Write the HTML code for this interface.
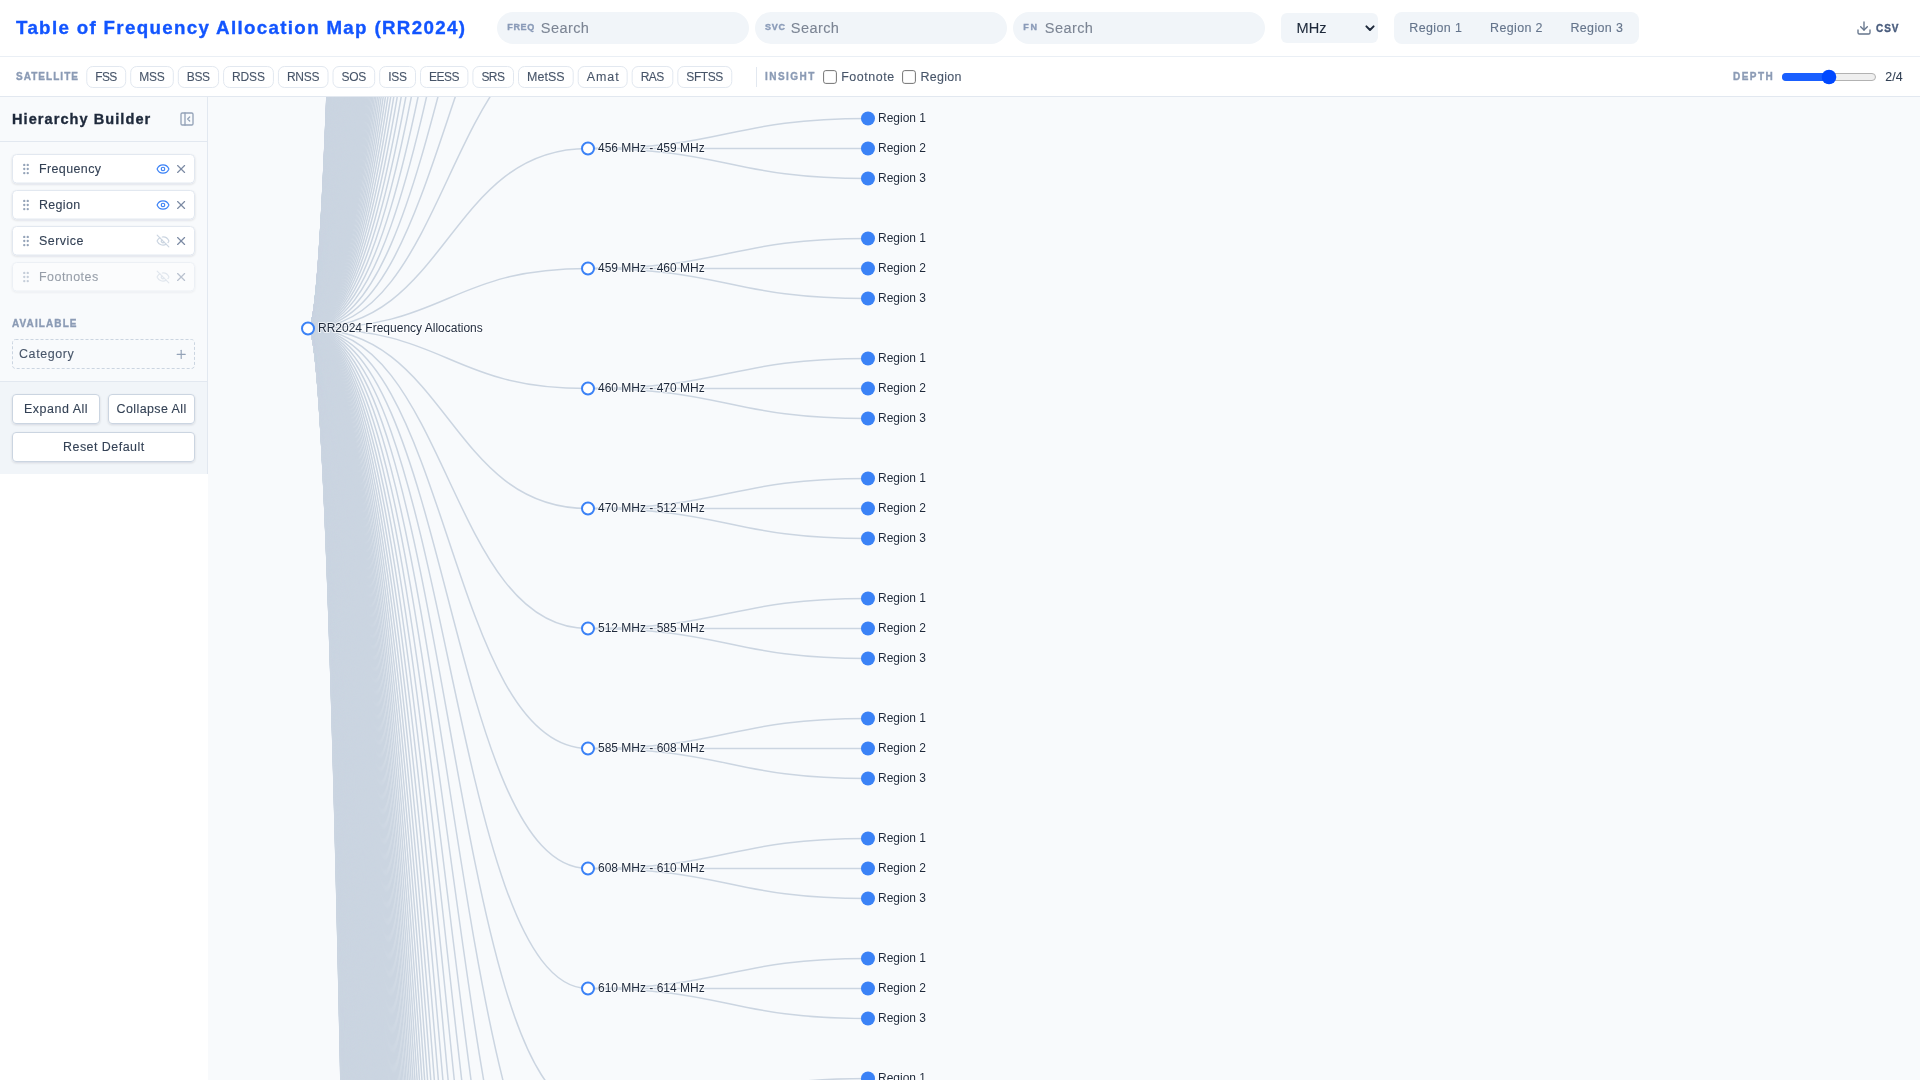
<!DOCTYPE html>
<html><head><meta charset="utf-8"><title>Table of Frequency Allocation Map (RR2024)</title>
<style>html,body{margin:0;padding:0;width:1920px;height:1080px;overflow:hidden;background:#fff}
svg{display:block;will-change:transform;font-family:"Liberation Sans",sans-serif}</style></head>
<body><svg width="1920" height="1080" viewBox="0 0 1920 1080">
<defs><filter id="sh" x="-10%" y="-30%" width="120%" height="170%"><feDropShadow dx="0" dy="1" stdDeviation="1" flood-color="#0f172a" flood-opacity="0.12"/></filter><clipPath id="cv"><rect x="208" y="97" width="1712" height="983"/></clipPath></defs>
<rect x="0" y="0" width="1920" height="1080" fill="#ffffff"/><rect x="208" y="97" width="1712" height="983" fill="#f8fafc"/><g clip-path="url(#cv)"><g transform="translate(0,0.5)"><g fill="none" stroke="#cbd5e1" stroke-width="1.5"><path d="M308,328C448.0,328 448.0,-36212 588,-36212"/><path d="M308,328C448.0,328 448.0,-36092 588,-36092"/><path d="M308,328C448.0,328 448.0,-35972 588,-35972"/><path d="M308,328C448.0,328 448.0,-35852 588,-35852"/><path d="M308,328C448.0,328 448.0,-35732 588,-35732"/><path d="M308,328C448.0,328 448.0,-35612 588,-35612"/><path d="M308,328C448.0,328 448.0,-35492 588,-35492"/><path d="M308,328C448.0,328 448.0,-35372 588,-35372"/><path d="M308,328C448.0,328 448.0,-35252 588,-35252"/><path d="M308,328C448.0,328 448.0,-35132 588,-35132"/><path d="M308,328C448.0,328 448.0,-35012 588,-35012"/><path d="M308,328C448.0,328 448.0,-34892 588,-34892"/><path d="M308,328C448.0,328 448.0,-34772 588,-34772"/><path d="M308,328C448.0,328 448.0,-34652 588,-34652"/><path d="M308,328C448.0,328 448.0,-34532 588,-34532"/><path d="M308,328C448.0,328 448.0,-34412 588,-34412"/><path d="M308,328C448.0,328 448.0,-34292 588,-34292"/><path d="M308,328C448.0,328 448.0,-34172 588,-34172"/><path d="M308,328C448.0,328 448.0,-34052 588,-34052"/><path d="M308,328C448.0,328 448.0,-33932 588,-33932"/><path d="M308,328C448.0,328 448.0,-33812 588,-33812"/><path d="M308,328C448.0,328 448.0,-33692 588,-33692"/><path d="M308,328C448.0,328 448.0,-33572 588,-33572"/><path d="M308,328C448.0,328 448.0,-33452 588,-33452"/><path d="M308,328C448.0,328 448.0,-33332 588,-33332"/><path d="M308,328C448.0,328 448.0,-33212 588,-33212"/><path d="M308,328C448.0,328 448.0,-33092 588,-33092"/><path d="M308,328C448.0,328 448.0,-32972 588,-32972"/><path d="M308,328C448.0,328 448.0,-32852 588,-32852"/><path d="M308,328C448.0,328 448.0,-32732 588,-32732"/><path d="M308,328C448.0,328 448.0,-32612 588,-32612"/><path d="M308,328C448.0,328 448.0,-32492 588,-32492"/><path d="M308,328C448.0,328 448.0,-32372 588,-32372"/><path d="M308,328C448.0,328 448.0,-32252 588,-32252"/><path d="M308,328C448.0,328 448.0,-32132 588,-32132"/><path d="M308,328C448.0,328 448.0,-32012 588,-32012"/><path d="M308,328C448.0,328 448.0,-31892 588,-31892"/><path d="M308,328C448.0,328 448.0,-31772 588,-31772"/><path d="M308,328C448.0,328 448.0,-31652 588,-31652"/><path d="M308,328C448.0,328 448.0,-31532 588,-31532"/><path d="M308,328C448.0,328 448.0,-31412 588,-31412"/><path d="M308,328C448.0,328 448.0,-31292 588,-31292"/><path d="M308,328C448.0,328 448.0,-31172 588,-31172"/><path d="M308,328C448.0,328 448.0,-31052 588,-31052"/><path d="M308,328C448.0,328 448.0,-30932 588,-30932"/><path d="M308,328C448.0,328 448.0,-30812 588,-30812"/><path d="M308,328C448.0,328 448.0,-30692 588,-30692"/><path d="M308,328C448.0,328 448.0,-30572 588,-30572"/><path d="M308,328C448.0,328 448.0,-30452 588,-30452"/><path d="M308,328C448.0,328 448.0,-30332 588,-30332"/><path d="M308,328C448.0,328 448.0,-30212 588,-30212"/><path d="M308,328C448.0,328 448.0,-30092 588,-30092"/><path d="M308,328C448.0,328 448.0,-29972 588,-29972"/><path d="M308,328C448.0,328 448.0,-29852 588,-29852"/><path d="M308,328C448.0,328 448.0,-29732 588,-29732"/><path d="M308,328C448.0,328 448.0,-29612 588,-29612"/><path d="M308,328C448.0,328 448.0,-29492 588,-29492"/><path d="M308,328C448.0,328 448.0,-29372 588,-29372"/><path d="M308,328C448.0,328 448.0,-29252 588,-29252"/><path d="M308,328C448.0,328 448.0,-29132 588,-29132"/><path d="M308,328C448.0,328 448.0,-29012 588,-29012"/><path d="M308,328C448.0,328 448.0,-28892 588,-28892"/><path d="M308,328C448.0,328 448.0,-28772 588,-28772"/><path d="M308,328C448.0,328 448.0,-28652 588,-28652"/><path d="M308,328C448.0,328 448.0,-28532 588,-28532"/><path d="M308,328C448.0,328 448.0,-28412 588,-28412"/><path d="M308,328C448.0,328 448.0,-28292 588,-28292"/><path d="M308,328C448.0,328 448.0,-28172 588,-28172"/><path d="M308,328C448.0,328 448.0,-28052 588,-28052"/><path d="M308,328C448.0,328 448.0,-27932 588,-27932"/><path d="M308,328C448.0,328 448.0,-27812 588,-27812"/><path d="M308,328C448.0,328 448.0,-27692 588,-27692"/><path d="M308,328C448.0,328 448.0,-27572 588,-27572"/><path d="M308,328C448.0,328 448.0,-27452 588,-27452"/><path d="M308,328C448.0,328 448.0,-27332 588,-27332"/><path d="M308,328C448.0,328 448.0,-27212 588,-27212"/><path d="M308,328C448.0,328 448.0,-27092 588,-27092"/><path d="M308,328C448.0,328 448.0,-26972 588,-26972"/><path d="M308,328C448.0,328 448.0,-26852 588,-26852"/><path d="M308,328C448.0,328 448.0,-26732 588,-26732"/><path d="M308,328C448.0,328 448.0,-26612 588,-26612"/><path d="M308,328C448.0,328 448.0,-26492 588,-26492"/><path d="M308,328C448.0,328 448.0,-26372 588,-26372"/><path d="M308,328C448.0,328 448.0,-26252 588,-26252"/><path d="M308,328C448.0,328 448.0,-26132 588,-26132"/><path d="M308,328C448.0,328 448.0,-26012 588,-26012"/><path d="M308,328C448.0,328 448.0,-25892 588,-25892"/><path d="M308,328C448.0,328 448.0,-25772 588,-25772"/><path d="M308,328C448.0,328 448.0,-25652 588,-25652"/><path d="M308,328C448.0,328 448.0,-25532 588,-25532"/><path d="M308,328C448.0,328 448.0,-25412 588,-25412"/><path d="M308,328C448.0,328 448.0,-25292 588,-25292"/><path d="M308,328C448.0,328 448.0,-25172 588,-25172"/><path d="M308,328C448.0,328 448.0,-25052 588,-25052"/><path d="M308,328C448.0,328 448.0,-24932 588,-24932"/><path d="M308,328C448.0,328 448.0,-24812 588,-24812"/><path d="M308,328C448.0,328 448.0,-24692 588,-24692"/><path d="M308,328C448.0,328 448.0,-24572 588,-24572"/><path d="M308,328C448.0,328 448.0,-24452 588,-24452"/><path d="M308,328C448.0,328 448.0,-24332 588,-24332"/><path d="M308,328C448.0,328 448.0,-24212 588,-24212"/><path d="M308,328C448.0,328 448.0,-24092 588,-24092"/><path d="M308,328C448.0,328 448.0,-23972 588,-23972"/><path d="M308,328C448.0,328 448.0,-23852 588,-23852"/><path d="M308,328C448.0,328 448.0,-23732 588,-23732"/><path d="M308,328C448.0,328 448.0,-23612 588,-23612"/><path d="M308,328C448.0,328 448.0,-23492 588,-23492"/><path d="M308,328C448.0,328 448.0,-23372 588,-23372"/><path d="M308,328C448.0,328 448.0,-23252 588,-23252"/><path d="M308,328C448.0,328 448.0,-23132 588,-23132"/><path d="M308,328C448.0,328 448.0,-23012 588,-23012"/><path d="M308,328C448.0,328 448.0,-22892 588,-22892"/><path d="M308,328C448.0,328 448.0,-22772 588,-22772"/><path d="M308,328C448.0,328 448.0,-22652 588,-22652"/><path d="M308,328C448.0,328 448.0,-22532 588,-22532"/><path d="M308,328C448.0,328 448.0,-22412 588,-22412"/><path d="M308,328C448.0,328 448.0,-22292 588,-22292"/><path d="M308,328C448.0,328 448.0,-22172 588,-22172"/><path d="M308,328C448.0,328 448.0,-22052 588,-22052"/><path d="M308,328C448.0,328 448.0,-21932 588,-21932"/><path d="M308,328C448.0,328 448.0,-21812 588,-21812"/><path d="M308,328C448.0,328 448.0,-21692 588,-21692"/><path d="M308,328C448.0,328 448.0,-21572 588,-21572"/><path d="M308,328C448.0,328 448.0,-21452 588,-21452"/><path d="M308,328C448.0,328 448.0,-21332 588,-21332"/><path d="M308,328C448.0,328 448.0,-21212 588,-21212"/><path d="M308,328C448.0,328 448.0,-21092 588,-21092"/><path d="M308,328C448.0,328 448.0,-20972 588,-20972"/><path d="M308,328C448.0,328 448.0,-20852 588,-20852"/><path d="M308,328C448.0,328 448.0,-20732 588,-20732"/><path d="M308,328C448.0,328 448.0,-20612 588,-20612"/><path d="M308,328C448.0,328 448.0,-20492 588,-20492"/><path d="M308,328C448.0,328 448.0,-20372 588,-20372"/><path d="M308,328C448.0,328 448.0,-20252 588,-20252"/><path d="M308,328C448.0,328 448.0,-20132 588,-20132"/><path d="M308,328C448.0,328 448.0,-20012 588,-20012"/><path d="M308,328C448.0,328 448.0,-19892 588,-19892"/><path d="M308,328C448.0,328 448.0,-19772 588,-19772"/><path d="M308,328C448.0,328 448.0,-19652 588,-19652"/><path d="M308,328C448.0,328 448.0,-19532 588,-19532"/><path d="M308,328C448.0,328 448.0,-19412 588,-19412"/><path d="M308,328C448.0,328 448.0,-19292 588,-19292"/><path d="M308,328C448.0,328 448.0,-19172 588,-19172"/><path d="M308,328C448.0,328 448.0,-19052 588,-19052"/><path d="M308,328C448.0,328 448.0,-18932 588,-18932"/><path d="M308,328C448.0,328 448.0,-18812 588,-18812"/><path d="M308,328C448.0,328 448.0,-18692 588,-18692"/><path d="M308,328C448.0,328 448.0,-18572 588,-18572"/><path d="M308,328C448.0,328 448.0,-18452 588,-18452"/><path d="M308,328C448.0,328 448.0,-18332 588,-18332"/><path d="M308,328C448.0,328 448.0,-18212 588,-18212"/><path d="M308,328C448.0,328 448.0,-18092 588,-18092"/><path d="M308,328C448.0,328 448.0,-17972 588,-17972"/><path d="M308,328C448.0,328 448.0,-17852 588,-17852"/><path d="M308,328C448.0,328 448.0,-17732 588,-17732"/><path d="M308,328C448.0,328 448.0,-17612 588,-17612"/><path d="M308,328C448.0,328 448.0,-17492 588,-17492"/><path d="M308,328C448.0,328 448.0,-17372 588,-17372"/><path d="M308,328C448.0,328 448.0,-17252 588,-17252"/><path d="M308,328C448.0,328 448.0,-17132 588,-17132"/><path d="M308,328C448.0,328 448.0,-17012 588,-17012"/><path d="M308,328C448.0,328 448.0,-16892 588,-16892"/><path d="M308,328C448.0,328 448.0,-16772 588,-16772"/><path d="M308,328C448.0,328 448.0,-16652 588,-16652"/><path d="M308,328C448.0,328 448.0,-16532 588,-16532"/><path d="M308,328C448.0,328 448.0,-16412 588,-16412"/><path d="M308,328C448.0,328 448.0,-16292 588,-16292"/><path d="M308,328C448.0,328 448.0,-16172 588,-16172"/><path d="M308,328C448.0,328 448.0,-16052 588,-16052"/><path d="M308,328C448.0,328 448.0,-15932 588,-15932"/><path d="M308,328C448.0,328 448.0,-15812 588,-15812"/><path d="M308,328C448.0,328 448.0,-15692 588,-15692"/><path d="M308,328C448.0,328 448.0,-15572 588,-15572"/><path d="M308,328C448.0,328 448.0,-15452 588,-15452"/><path d="M308,328C448.0,328 448.0,-15332 588,-15332"/><path d="M308,328C448.0,328 448.0,-15212 588,-15212"/><path d="M308,328C448.0,328 448.0,-15092 588,-15092"/><path d="M308,328C448.0,328 448.0,-14972 588,-14972"/><path d="M308,328C448.0,328 448.0,-14852 588,-14852"/><path d="M308,328C448.0,328 448.0,-14732 588,-14732"/><path d="M308,328C448.0,328 448.0,-14612 588,-14612"/><path d="M308,328C448.0,328 448.0,-14492 588,-14492"/><path d="M308,328C448.0,328 448.0,-14372 588,-14372"/><path d="M308,328C448.0,328 448.0,-14252 588,-14252"/><path d="M308,328C448.0,328 448.0,-14132 588,-14132"/><path d="M308,328C448.0,328 448.0,-14012 588,-14012"/><path d="M308,328C448.0,328 448.0,-13892 588,-13892"/><path d="M308,328C448.0,328 448.0,-13772 588,-13772"/><path d="M308,328C448.0,328 448.0,-13652 588,-13652"/><path d="M308,328C448.0,328 448.0,-13532 588,-13532"/><path d="M308,328C448.0,328 448.0,-13412 588,-13412"/><path d="M308,328C448.0,328 448.0,-13292 588,-13292"/><path d="M308,328C448.0,328 448.0,-13172 588,-13172"/><path d="M308,328C448.0,328 448.0,-13052 588,-13052"/><path d="M308,328C448.0,328 448.0,-12932 588,-12932"/><path d="M308,328C448.0,328 448.0,-12812 588,-12812"/><path d="M308,328C448.0,328 448.0,-12692 588,-12692"/><path d="M308,328C448.0,328 448.0,-12572 588,-12572"/><path d="M308,328C448.0,328 448.0,-12452 588,-12452"/><path d="M308,328C448.0,328 448.0,-12332 588,-12332"/><path d="M308,328C448.0,328 448.0,-12212 588,-12212"/><path d="M308,328C448.0,328 448.0,-12092 588,-12092"/><path d="M308,328C448.0,328 448.0,-11972 588,-11972"/><path d="M308,328C448.0,328 448.0,-11852 588,-11852"/><path d="M308,328C448.0,328 448.0,-11732 588,-11732"/><path d="M308,328C448.0,328 448.0,-11612 588,-11612"/><path d="M308,328C448.0,328 448.0,-11492 588,-11492"/><path d="M308,328C448.0,328 448.0,-11372 588,-11372"/><path d="M308,328C448.0,328 448.0,-11252 588,-11252"/><path d="M308,328C448.0,328 448.0,-11132 588,-11132"/><path d="M308,328C448.0,328 448.0,-11012 588,-11012"/><path d="M308,328C448.0,328 448.0,-10892 588,-10892"/><path d="M308,328C448.0,328 448.0,-10772 588,-10772"/><path d="M308,328C448.0,328 448.0,-10652 588,-10652"/><path d="M308,328C448.0,328 448.0,-10532 588,-10532"/><path d="M308,328C448.0,328 448.0,-10412 588,-10412"/><path d="M308,328C448.0,328 448.0,-10292 588,-10292"/><path d="M308,328C448.0,328 448.0,-10172 588,-10172"/><path d="M308,328C448.0,328 448.0,-10052 588,-10052"/><path d="M308,328C448.0,328 448.0,-9932 588,-9932"/><path d="M308,328C448.0,328 448.0,-9812 588,-9812"/><path d="M308,328C448.0,328 448.0,-9692 588,-9692"/><path d="M308,328C448.0,328 448.0,-9572 588,-9572"/><path d="M308,328C448.0,328 448.0,-9452 588,-9452"/><path d="M308,328C448.0,328 448.0,-9332 588,-9332"/><path d="M308,328C448.0,328 448.0,-9212 588,-9212"/><path d="M308,328C448.0,328 448.0,-9092 588,-9092"/><path d="M308,328C448.0,328 448.0,-8972 588,-8972"/><path d="M308,328C448.0,328 448.0,-8852 588,-8852"/><path d="M308,328C448.0,328 448.0,-8732 588,-8732"/><path d="M308,328C448.0,328 448.0,-8612 588,-8612"/><path d="M308,328C448.0,328 448.0,-8492 588,-8492"/><path d="M308,328C448.0,328 448.0,-8372 588,-8372"/><path d="M308,328C448.0,328 448.0,-8252 588,-8252"/><path d="M308,328C448.0,328 448.0,-8132 588,-8132"/><path d="M308,328C448.0,328 448.0,-8012 588,-8012"/><path d="M308,328C448.0,328 448.0,-7892 588,-7892"/><path d="M308,328C448.0,328 448.0,-7772 588,-7772"/><path d="M308,328C448.0,328 448.0,-7652 588,-7652"/><path d="M308,328C448.0,328 448.0,-7532 588,-7532"/><path d="M308,328C448.0,328 448.0,-7412 588,-7412"/><path d="M308,328C448.0,328 448.0,-7292 588,-7292"/><path d="M308,328C448.0,328 448.0,-7172 588,-7172"/><path d="M308,328C448.0,328 448.0,-7052 588,-7052"/><path d="M308,328C448.0,328 448.0,-6932 588,-6932"/><path d="M308,328C448.0,328 448.0,-6812 588,-6812"/><path d="M308,328C448.0,328 448.0,-6692 588,-6692"/><path d="M308,328C448.0,328 448.0,-6572 588,-6572"/><path d="M308,328C448.0,328 448.0,-6452 588,-6452"/><path d="M308,328C448.0,328 448.0,-6332 588,-6332"/><path d="M308,328C448.0,328 448.0,-6212 588,-6212"/><path d="M308,328C448.0,328 448.0,-6092 588,-6092"/><path d="M308,328C448.0,328 448.0,-5972 588,-5972"/><path d="M308,328C448.0,328 448.0,-5852 588,-5852"/><path d="M308,328C448.0,328 448.0,-5732 588,-5732"/><path d="M308,328C448.0,328 448.0,-5612 588,-5612"/><path d="M308,328C448.0,328 448.0,-5492 588,-5492"/><path d="M308,328C448.0,328 448.0,-5372 588,-5372"/><path d="M308,328C448.0,328 448.0,-5252 588,-5252"/><path d="M308,328C448.0,328 448.0,-5132 588,-5132"/><path d="M308,328C448.0,328 448.0,-5012 588,-5012"/><path d="M308,328C448.0,328 448.0,-4892 588,-4892"/><path d="M308,328C448.0,328 448.0,-4772 588,-4772"/><path d="M308,328C448.0,328 448.0,-4652 588,-4652"/><path d="M308,328C448.0,328 448.0,-4532 588,-4532"/><path d="M308,328C448.0,328 448.0,-4412 588,-4412"/><path d="M308,328C448.0,328 448.0,-4292 588,-4292"/><path d="M308,328C448.0,328 448.0,-4172 588,-4172"/><path d="M308,328C448.0,328 448.0,-4052 588,-4052"/><path d="M308,328C448.0,328 448.0,-3932 588,-3932"/><path d="M308,328C448.0,328 448.0,-3812 588,-3812"/><path d="M308,328C448.0,328 448.0,-3692 588,-3692"/><path d="M308,328C448.0,328 448.0,-3572 588,-3572"/><path d="M308,328C448.0,328 448.0,-3452 588,-3452"/><path d="M308,328C448.0,328 448.0,-3332 588,-3332"/><path d="M308,328C448.0,328 448.0,-3212 588,-3212"/><path d="M308,328C448.0,328 448.0,-3092 588,-3092"/><path d="M308,328C448.0,328 448.0,-2972 588,-2972"/><path d="M308,328C448.0,328 448.0,-2852 588,-2852"/><path d="M308,328C448.0,328 448.0,-2732 588,-2732"/><path d="M308,328C448.0,328 448.0,-2612 588,-2612"/><path d="M308,328C448.0,328 448.0,-2492 588,-2492"/><path d="M308,328C448.0,328 448.0,-2372 588,-2372"/><path d="M308,328C448.0,328 448.0,-2252 588,-2252"/><path d="M308,328C448.0,328 448.0,-2132 588,-2132"/><path d="M308,328C448.0,328 448.0,-2012 588,-2012"/><path d="M308,328C448.0,328 448.0,-1892 588,-1892"/><path d="M308,328C448.0,328 448.0,-1772 588,-1772"/><path d="M308,328C448.0,328 448.0,-1652 588,-1652"/><path d="M308,328C448.0,328 448.0,-1532 588,-1532"/><path d="M308,328C448.0,328 448.0,-1412 588,-1412"/><path d="M308,328C448.0,328 448.0,-1292 588,-1292"/><path d="M308,328C448.0,328 448.0,-1172 588,-1172"/><path d="M308,328C448.0,328 448.0,-1052 588,-1052"/><path d="M308,328C448.0,328 448.0,-932 588,-932"/><path d="M308,328C448.0,328 448.0,-812 588,-812"/><path d="M308,328C448.0,328 448.0,-692 588,-692"/><path d="M308,328C448.0,328 448.0,-572 588,-572"/><path d="M308,328C448.0,328 448.0,-452 588,-452"/><path d="M308,328C448.0,328 448.0,-332 588,-332"/><path d="M308,328C448.0,328 448.0,-212 588,-212"/><path d="M308,328C448.0,328 448.0,-92 588,-92"/><path d="M308,328C448.0,328 448.0,28 588,28"/><path d="M308,328C448.0,328 448.0,148 588,148"/><path d="M308,328C448.0,328 448.0,268 588,268"/><path d="M308,328C448.0,328 448.0,388 588,388"/><path d="M308,328C448.0,328 448.0,508 588,508"/><path d="M308,328C448.0,328 448.0,628 588,628"/><path d="M308,328C448.0,328 448.0,748 588,748"/><path d="M308,328C448.0,328 448.0,868 588,868"/><path d="M308,328C448.0,328 448.0,988 588,988"/><path d="M308,328C448.0,328 448.0,1108 588,1108"/><path d="M308,328C448.0,328 448.0,1228 588,1228"/><path d="M308,328C448.0,328 448.0,1348 588,1348"/><path d="M308,328C448.0,328 448.0,1468 588,1468"/><path d="M308,328C448.0,328 448.0,1588 588,1588"/><path d="M308,328C448.0,328 448.0,1708 588,1708"/><path d="M308,328C448.0,328 448.0,1828 588,1828"/><path d="M308,328C448.0,328 448.0,1948 588,1948"/><path d="M308,328C448.0,328 448.0,2068 588,2068"/><path d="M308,328C448.0,328 448.0,2188 588,2188"/><path d="M308,328C448.0,328 448.0,2308 588,2308"/><path d="M308,328C448.0,328 448.0,2428 588,2428"/><path d="M308,328C448.0,328 448.0,2548 588,2548"/><path d="M308,328C448.0,328 448.0,2668 588,2668"/><path d="M308,328C448.0,328 448.0,2788 588,2788"/><path d="M308,328C448.0,328 448.0,2908 588,2908"/><path d="M308,328C448.0,328 448.0,3028 588,3028"/><path d="M308,328C448.0,328 448.0,3148 588,3148"/><path d="M308,328C448.0,328 448.0,3268 588,3268"/><path d="M308,328C448.0,328 448.0,3388 588,3388"/><path d="M308,328C448.0,328 448.0,3508 588,3508"/><path d="M308,328C448.0,328 448.0,3628 588,3628"/><path d="M308,328C448.0,328 448.0,3748 588,3748"/><path d="M308,328C448.0,328 448.0,3868 588,3868"/><path d="M308,328C448.0,328 448.0,3988 588,3988"/><path d="M308,328C448.0,328 448.0,4108 588,4108"/><path d="M308,328C448.0,328 448.0,4228 588,4228"/><path d="M308,328C448.0,328 448.0,4348 588,4348"/><path d="M308,328C448.0,328 448.0,4468 588,4468"/><path d="M308,328C448.0,328 448.0,4588 588,4588"/><path d="M308,328C448.0,328 448.0,4708 588,4708"/><path d="M308,328C448.0,328 448.0,4828 588,4828"/><path d="M308,328C448.0,328 448.0,4948 588,4948"/><path d="M308,328C448.0,328 448.0,5068 588,5068"/><path d="M308,328C448.0,328 448.0,5188 588,5188"/><path d="M308,328C448.0,328 448.0,5308 588,5308"/><path d="M308,328C448.0,328 448.0,5428 588,5428"/><path d="M308,328C448.0,328 448.0,5548 588,5548"/><path d="M308,328C448.0,328 448.0,5668 588,5668"/><path d="M308,328C448.0,328 448.0,5788 588,5788"/><path d="M308,328C448.0,328 448.0,5908 588,5908"/><path d="M308,328C448.0,328 448.0,6028 588,6028"/><path d="M308,328C448.0,328 448.0,6148 588,6148"/><path d="M308,328C448.0,328 448.0,6268 588,6268"/><path d="M308,328C448.0,328 448.0,6388 588,6388"/><path d="M308,328C448.0,328 448.0,6508 588,6508"/><path d="M308,328C448.0,328 448.0,6628 588,6628"/><path d="M308,328C448.0,328 448.0,6748 588,6748"/><path d="M308,328C448.0,328 448.0,6868 588,6868"/><path d="M308,328C448.0,328 448.0,6988 588,6988"/><path d="M308,328C448.0,328 448.0,7108 588,7108"/><path d="M308,328C448.0,328 448.0,7228 588,7228"/><path d="M308,328C448.0,328 448.0,7348 588,7348"/><path d="M308,328C448.0,328 448.0,7468 588,7468"/><path d="M308,328C448.0,328 448.0,7588 588,7588"/><path d="M308,328C448.0,328 448.0,7708 588,7708"/><path d="M308,328C448.0,328 448.0,7828 588,7828"/><path d="M308,328C448.0,328 448.0,7948 588,7948"/><path d="M308,328C448.0,328 448.0,8068 588,8068"/><path d="M308,328C448.0,328 448.0,8188 588,8188"/><path d="M308,328C448.0,328 448.0,8308 588,8308"/><path d="M308,328C448.0,328 448.0,8428 588,8428"/><path d="M308,328C448.0,328 448.0,8548 588,8548"/><path d="M308,328C448.0,328 448.0,8668 588,8668"/><path d="M308,328C448.0,328 448.0,8788 588,8788"/><path d="M308,328C448.0,328 448.0,8908 588,8908"/><path d="M308,328C448.0,328 448.0,9028 588,9028"/><path d="M308,328C448.0,328 448.0,9148 588,9148"/><path d="M308,328C448.0,328 448.0,9268 588,9268"/><path d="M308,328C448.0,328 448.0,9388 588,9388"/><path d="M308,328C448.0,328 448.0,9508 588,9508"/><path d="M308,328C448.0,328 448.0,9628 588,9628"/><path d="M308,328C448.0,328 448.0,9748 588,9748"/><path d="M308,328C448.0,328 448.0,9868 588,9868"/><path d="M308,328C448.0,328 448.0,9988 588,9988"/><path d="M308,328C448.0,328 448.0,10108 588,10108"/><path d="M308,328C448.0,328 448.0,10228 588,10228"/><path d="M308,328C448.0,328 448.0,10348 588,10348"/><path d="M308,328C448.0,328 448.0,10468 588,10468"/><path d="M308,328C448.0,328 448.0,10588 588,10588"/><path d="M308,328C448.0,328 448.0,10708 588,10708"/><path d="M308,328C448.0,328 448.0,10828 588,10828"/><path d="M308,328C448.0,328 448.0,10948 588,10948"/><path d="M308,328C448.0,328 448.0,11068 588,11068"/><path d="M308,328C448.0,328 448.0,11188 588,11188"/><path d="M308,328C448.0,328 448.0,11308 588,11308"/><path d="M308,328C448.0,328 448.0,11428 588,11428"/><path d="M308,328C448.0,328 448.0,11548 588,11548"/><path d="M308,328C448.0,328 448.0,11668 588,11668"/><path d="M308,328C448.0,328 448.0,11788 588,11788"/><path d="M308,328C448.0,328 448.0,11908 588,11908"/><path d="M308,328C448.0,328 448.0,12028 588,12028"/><path d="M308,328C448.0,328 448.0,12148 588,12148"/><path d="M308,328C448.0,328 448.0,12268 588,12268"/><path d="M308,328C448.0,328 448.0,12388 588,12388"/><path d="M308,328C448.0,328 448.0,12508 588,12508"/><path d="M308,328C448.0,328 448.0,12628 588,12628"/><path d="M308,328C448.0,328 448.0,12748 588,12748"/><path d="M308,328C448.0,328 448.0,12868 588,12868"/><path d="M308,328C448.0,328 448.0,12988 588,12988"/><path d="M308,328C448.0,328 448.0,13108 588,13108"/><path d="M308,328C448.0,328 448.0,13228 588,13228"/><path d="M308,328C448.0,328 448.0,13348 588,13348"/><path d="M308,328C448.0,328 448.0,13468 588,13468"/><path d="M308,328C448.0,328 448.0,13588 588,13588"/><path d="M308,328C448.0,328 448.0,13708 588,13708"/><path d="M308,328C448.0,328 448.0,13828 588,13828"/><path d="M308,328C448.0,328 448.0,13948 588,13948"/><path d="M308,328C448.0,328 448.0,14068 588,14068"/><path d="M308,328C448.0,328 448.0,14188 588,14188"/><path d="M308,328C448.0,328 448.0,14308 588,14308"/><path d="M308,328C448.0,328 448.0,14428 588,14428"/><path d="M308,328C448.0,328 448.0,14548 588,14548"/><path d="M308,328C448.0,328 448.0,14668 588,14668"/><path d="M308,328C448.0,328 448.0,14788 588,14788"/><path d="M308,328C448.0,328 448.0,14908 588,14908"/><path d="M308,328C448.0,328 448.0,15028 588,15028"/><path d="M308,328C448.0,328 448.0,15148 588,15148"/><path d="M308,328C448.0,328 448.0,15268 588,15268"/><path d="M308,328C448.0,328 448.0,15388 588,15388"/><path d="M308,328C448.0,328 448.0,15508 588,15508"/><path d="M308,328C448.0,328 448.0,15628 588,15628"/><path d="M308,328C448.0,328 448.0,15748 588,15748"/><path d="M308,328C448.0,328 448.0,15868 588,15868"/><path d="M308,328C448.0,328 448.0,15988 588,15988"/><path d="M308,328C448.0,328 448.0,16108 588,16108"/><path d="M308,328C448.0,328 448.0,16228 588,16228"/><path d="M308,328C448.0,328 448.0,16348 588,16348"/><path d="M308,328C448.0,328 448.0,16468 588,16468"/><path d="M308,328C448.0,328 448.0,16588 588,16588"/><path d="M308,328C448.0,328 448.0,16708 588,16708"/><path d="M308,328C448.0,328 448.0,16828 588,16828"/><path d="M308,328C448.0,328 448.0,16948 588,16948"/><path d="M308,328C448.0,328 448.0,17068 588,17068"/><path d="M308,328C448.0,328 448.0,17188 588,17188"/><path d="M308,328C448.0,328 448.0,17308 588,17308"/><path d="M308,328C448.0,328 448.0,17428 588,17428"/><path d="M308,328C448.0,328 448.0,17548 588,17548"/><path d="M308,328C448.0,328 448.0,17668 588,17668"/><path d="M308,328C448.0,328 448.0,17788 588,17788"/><path d="M308,328C448.0,328 448.0,17908 588,17908"/><path d="M308,328C448.0,328 448.0,18028 588,18028"/><path d="M308,328C448.0,328 448.0,18148 588,18148"/><path d="M308,328C448.0,328 448.0,18268 588,18268"/><path d="M308,328C448.0,328 448.0,18388 588,18388"/><path d="M308,328C448.0,328 448.0,18508 588,18508"/><path d="M308,328C448.0,328 448.0,18628 588,18628"/><path d="M308,328C448.0,328 448.0,18748 588,18748"/><path d="M308,328C448.0,328 448.0,18868 588,18868"/><path d="M308,328C448.0,328 448.0,18988 588,18988"/><path d="M308,328C448.0,328 448.0,19108 588,19108"/><path d="M308,328C448.0,328 448.0,19228 588,19228"/><path d="M308,328C448.0,328 448.0,19348 588,19348"/><path d="M308,328C448.0,328 448.0,19468 588,19468"/><path d="M308,328C448.0,328 448.0,19588 588,19588"/><path d="M308,328C448.0,328 448.0,19708 588,19708"/><path d="M308,328C448.0,328 448.0,19828 588,19828"/><path d="M308,328C448.0,328 448.0,19948 588,19948"/><path d="M308,328C448.0,328 448.0,20068 588,20068"/><path d="M308,328C448.0,328 448.0,20188 588,20188"/><path d="M308,328C448.0,328 448.0,20308 588,20308"/><path d="M308,328C448.0,328 448.0,20428 588,20428"/><path d="M308,328C448.0,328 448.0,20548 588,20548"/><path d="M308,328C448.0,328 448.0,20668 588,20668"/><path d="M308,328C448.0,328 448.0,20788 588,20788"/><path d="M308,328C448.0,328 448.0,20908 588,20908"/><path d="M308,328C448.0,328 448.0,21028 588,21028"/><path d="M308,328C448.0,328 448.0,21148 588,21148"/><path d="M308,328C448.0,328 448.0,21268 588,21268"/><path d="M308,328C448.0,328 448.0,21388 588,21388"/><path d="M308,328C448.0,328 448.0,21508 588,21508"/><path d="M308,328C448.0,328 448.0,21628 588,21628"/><path d="M308,328C448.0,328 448.0,21748 588,21748"/><path d="M308,328C448.0,328 448.0,21868 588,21868"/><path d="M308,328C448.0,328 448.0,21988 588,21988"/><path d="M308,328C448.0,328 448.0,22108 588,22108"/><path d="M308,328C448.0,328 448.0,22228 588,22228"/><path d="M308,328C448.0,328 448.0,22348 588,22348"/><path d="M308,328C448.0,328 448.0,22468 588,22468"/><path d="M308,328C448.0,328 448.0,22588 588,22588"/><path d="M308,328C448.0,328 448.0,22708 588,22708"/><path d="M308,328C448.0,328 448.0,22828 588,22828"/><path d="M308,328C448.0,328 448.0,22948 588,22948"/><path d="M308,328C448.0,328 448.0,23068 588,23068"/><path d="M308,328C448.0,328 448.0,23188 588,23188"/><path d="M308,328C448.0,328 448.0,23308 588,23308"/><path d="M308,328C448.0,328 448.0,23428 588,23428"/><path d="M308,328C448.0,328 448.0,23548 588,23548"/><path d="M308,328C448.0,328 448.0,23668 588,23668"/><path d="M308,328C448.0,328 448.0,23788 588,23788"/><path d="M308,328C448.0,328 448.0,23908 588,23908"/><path d="M308,328C448.0,328 448.0,24028 588,24028"/><path d="M308,328C448.0,328 448.0,24148 588,24148"/><path d="M308,328C448.0,328 448.0,24268 588,24268"/><path d="M308,328C448.0,328 448.0,24388 588,24388"/><path d="M308,328C448.0,328 448.0,24508 588,24508"/><path d="M308,328C448.0,328 448.0,24628 588,24628"/><path d="M308,328C448.0,328 448.0,24748 588,24748"/><path d="M308,328C448.0,328 448.0,24868 588,24868"/><path d="M308,328C448.0,328 448.0,24988 588,24988"/><path d="M308,328C448.0,328 448.0,25108 588,25108"/><path d="M308,328C448.0,328 448.0,25228 588,25228"/><path d="M308,328C448.0,328 448.0,25348 588,25348"/><path d="M308,328C448.0,328 448.0,25468 588,25468"/><path d="M308,328C448.0,328 448.0,25588 588,25588"/><path d="M308,328C448.0,328 448.0,25708 588,25708"/><path d="M308,328C448.0,328 448.0,25828 588,25828"/><path d="M308,328C448.0,328 448.0,25948 588,25948"/><path d="M308,328C448.0,328 448.0,26068 588,26068"/><path d="M308,328C448.0,328 448.0,26188 588,26188"/><path d="M308,328C448.0,328 448.0,26308 588,26308"/><path d="M308,328C448.0,328 448.0,26428 588,26428"/><path d="M308,328C448.0,328 448.0,26548 588,26548"/><path d="M308,328C448.0,328 448.0,26668 588,26668"/><path d="M308,328C448.0,328 448.0,26788 588,26788"/><path d="M308,328C448.0,328 448.0,26908 588,26908"/><path d="M308,328C448.0,328 448.0,27028 588,27028"/><path d="M308,328C448.0,328 448.0,27148 588,27148"/><path d="M308,328C448.0,328 448.0,27268 588,27268"/><path d="M308,328C448.0,328 448.0,27388 588,27388"/><path d="M308,328C448.0,328 448.0,27508 588,27508"/><path d="M308,328C448.0,328 448.0,27628 588,27628"/><path d="M308,328C448.0,328 448.0,27748 588,27748"/><path d="M308,328C448.0,328 448.0,27868 588,27868"/><path d="M308,328C448.0,328 448.0,27988 588,27988"/><path d="M308,328C448.0,328 448.0,28108 588,28108"/><path d="M308,328C448.0,328 448.0,28228 588,28228"/><path d="M308,328C448.0,328 448.0,28348 588,28348"/><path d="M308,328C448.0,328 448.0,28468 588,28468"/><path d="M308,328C448.0,328 448.0,28588 588,28588"/><path d="M308,328C448.0,328 448.0,28708 588,28708"/><path d="M308,328C448.0,328 448.0,28828 588,28828"/><path d="M308,328C448.0,328 448.0,28948 588,28948"/><path d="M308,328C448.0,328 448.0,29068 588,29068"/><path d="M308,328C448.0,328 448.0,29188 588,29188"/><path d="M308,328C448.0,328 448.0,29308 588,29308"/><path d="M308,328C448.0,328 448.0,29428 588,29428"/><path d="M308,328C448.0,328 448.0,29548 588,29548"/><path d="M308,328C448.0,328 448.0,29668 588,29668"/><path d="M308,328C448.0,328 448.0,29788 588,29788"/><path d="M308,328C448.0,328 448.0,29908 588,29908"/><path d="M308,328C448.0,328 448.0,30028 588,30028"/><path d="M308,328C448.0,328 448.0,30148 588,30148"/><path d="M308,328C448.0,328 448.0,30268 588,30268"/><path d="M308,328C448.0,328 448.0,30388 588,30388"/><path d="M308,328C448.0,328 448.0,30508 588,30508"/><path d="M308,328C448.0,328 448.0,30628 588,30628"/><path d="M308,328C448.0,328 448.0,30748 588,30748"/><path d="M308,328C448.0,328 448.0,30868 588,30868"/><path d="M308,328C448.0,328 448.0,30988 588,30988"/><path d="M308,328C448.0,328 448.0,31108 588,31108"/><path d="M308,328C448.0,328 448.0,31228 588,31228"/><path d="M308,328C448.0,328 448.0,31348 588,31348"/><path d="M308,328C448.0,328 448.0,31468 588,31468"/><path d="M308,328C448.0,328 448.0,31588 588,31588"/><path d="M308,328C448.0,328 448.0,31708 588,31708"/><path d="M308,328C448.0,328 448.0,31828 588,31828"/><path d="M308,328C448.0,328 448.0,31948 588,31948"/><path d="M308,328C448.0,328 448.0,32068 588,32068"/><path d="M308,328C448.0,328 448.0,32188 588,32188"/><path d="M308,328C448.0,328 448.0,32308 588,32308"/><path d="M308,328C448.0,328 448.0,32428 588,32428"/><path d="M308,328C448.0,328 448.0,32548 588,32548"/><path d="M308,328C448.0,328 448.0,32668 588,32668"/><path d="M308,328C448.0,328 448.0,32788 588,32788"/><path d="M308,328C448.0,328 448.0,32908 588,32908"/><path d="M308,328C448.0,328 448.0,33028 588,33028"/><path d="M308,328C448.0,328 448.0,33148 588,33148"/><path d="M308,328C448.0,328 448.0,33268 588,33268"/><path d="M308,328C448.0,328 448.0,33388 588,33388"/><path d="M308,328C448.0,328 448.0,33508 588,33508"/><path d="M308,328C448.0,328 448.0,33628 588,33628"/><path d="M308,328C448.0,328 448.0,33748 588,33748"/><path d="M308,328C448.0,328 448.0,33868 588,33868"/><path d="M308,328C448.0,328 448.0,33988 588,33988"/><path d="M308,328C448.0,328 448.0,34108 588,34108"/><path d="M308,328C448.0,328 448.0,34228 588,34228"/><path d="M308,328C448.0,328 448.0,34348 588,34348"/><path d="M308,328C448.0,328 448.0,34468 588,34468"/><path d="M308,328C448.0,328 448.0,34588 588,34588"/><path d="M308,328C448.0,328 448.0,34708 588,34708"/><path d="M308,328C448.0,328 448.0,34828 588,34828"/><path d="M308,328C448.0,328 448.0,34948 588,34948"/><path d="M308,328C448.0,328 448.0,35068 588,35068"/><path d="M308,328C448.0,328 448.0,35188 588,35188"/><path d="M308,328C448.0,328 448.0,35308 588,35308"/><path d="M308,328C448.0,328 448.0,35428 588,35428"/><path d="M308,328C448.0,328 448.0,35548 588,35548"/><path d="M308,328C448.0,328 448.0,35668 588,35668"/><path d="M308,328C448.0,328 448.0,35788 588,35788"/><path d="M308,328C448.0,328 448.0,35908 588,35908"/><path d="M308,328C448.0,328 448.0,36028 588,36028"/><path d="M308,328C448.0,328 448.0,36148 588,36148"/><path d="M308,328C448.0,328 448.0,36268 588,36268"/><path d="M308,328C448.0,328 448.0,36388 588,36388"/><path d="M308,328C448.0,328 448.0,36508 588,36508"/><path d="M308,328C448.0,328 448.0,36628 588,36628"/><path d="M308,328C448.0,328 448.0,36748 588,36748"/><path d="M308,328C448.0,328 448.0,36868 588,36868"/></g><g fill="none" stroke="#cbd5e1" stroke-width="1.5"><path d="M588,28C728.0,28 728.0,-2 868,-2"/><path d="M588,28C728.0,28 728.0,28 868,28"/><path d="M588,28C728.0,28 728.0,58 868,58"/><path d="M588,148C728.0,148 728.0,118 868,118"/><path d="M588,148C728.0,148 728.0,148 868,148"/><path d="M588,148C728.0,148 728.0,178 868,178"/><path d="M588,268C728.0,268 728.0,238 868,238"/><path d="M588,268C728.0,268 728.0,268 868,268"/><path d="M588,268C728.0,268 728.0,298 868,298"/><path d="M588,388C728.0,388 728.0,358 868,358"/><path d="M588,388C728.0,388 728.0,388 868,388"/><path d="M588,388C728.0,388 728.0,418 868,418"/><path d="M588,508C728.0,508 728.0,478 868,478"/><path d="M588,508C728.0,508 728.0,508 868,508"/><path d="M588,508C728.0,508 728.0,538 868,538"/><path d="M588,628C728.0,628 728.0,598 868,598"/><path d="M588,628C728.0,628 728.0,628 868,628"/><path d="M588,628C728.0,628 728.0,658 868,658"/><path d="M588,748C728.0,748 728.0,718 868,718"/><path d="M588,748C728.0,748 728.0,748 868,748"/><path d="M588,748C728.0,748 728.0,778 868,778"/><path d="M588,868C728.0,868 728.0,838 868,838"/><path d="M588,868C728.0,868 728.0,868 868,868"/><path d="M588,868C728.0,868 728.0,898 868,898"/><path d="M588,988C728.0,988 728.0,958 868,958"/><path d="M588,988C728.0,988 728.0,988 868,988"/><path d="M588,988C728.0,988 728.0,1018 868,1018"/><path d="M588,1108C728.0,1108 728.0,1078 868,1078"/><path d="M588,1108C728.0,1108 728.0,1108 868,1108"/><path d="M588,1108C728.0,1108 728.0,1138 868,1138"/></g><circle cx="308" cy="328" r="6" fill="#fff" stroke="#3b82f6" stroke-width="2"/><text x="318" y="331.5" font-family="Liberation Sans" font-size="12" fill="#1e293b" stroke="#ffffff" stroke-opacity="0.6" stroke-width="2" paint-order="stroke" stroke-linejoin="round">RR2024 Frequency Allocations</text><circle cx="868" cy="-2" r="7" fill="#3b82f6"/><text x="878" y="1.5" font-family="Liberation Sans" font-size="12" fill="#1e293b" stroke="#ffffff" stroke-opacity="0.6" stroke-width="2" paint-order="stroke" stroke-linejoin="round">Region 1</text><circle cx="868" cy="28" r="7" fill="#3b82f6"/><text x="878" y="31.5" font-family="Liberation Sans" font-size="12" fill="#1e293b" stroke="#ffffff" stroke-opacity="0.6" stroke-width="2" paint-order="stroke" stroke-linejoin="round">Region 2</text><circle cx="868" cy="58" r="7" fill="#3b82f6"/><text x="878" y="61.5" font-family="Liberation Sans" font-size="12" fill="#1e293b" stroke="#ffffff" stroke-opacity="0.6" stroke-width="2" paint-order="stroke" stroke-linejoin="round">Region 3</text><circle cx="588" cy="28" r="6" fill="#fff" stroke="#3b82f6" stroke-width="2"/><text x="598" y="31.5" font-family="Liberation Sans" font-size="12" fill="#1e293b" stroke="#ffffff" stroke-opacity="0.6" stroke-width="2" paint-order="stroke" stroke-linejoin="round">450 MHz - 455 MHz</text><circle cx="868" cy="118" r="7" fill="#3b82f6"/><text x="878" y="121.5" font-family="Liberation Sans" font-size="12" fill="#1e293b" stroke="#ffffff" stroke-opacity="0.6" stroke-width="2" paint-order="stroke" stroke-linejoin="round">Region 1</text><circle cx="868" cy="148" r="7" fill="#3b82f6"/><text x="878" y="151.5" font-family="Liberation Sans" font-size="12" fill="#1e293b" stroke="#ffffff" stroke-opacity="0.6" stroke-width="2" paint-order="stroke" stroke-linejoin="round">Region 2</text><circle cx="868" cy="178" r="7" fill="#3b82f6"/><text x="878" y="181.5" font-family="Liberation Sans" font-size="12" fill="#1e293b" stroke="#ffffff" stroke-opacity="0.6" stroke-width="2" paint-order="stroke" stroke-linejoin="round">Region 3</text><circle cx="588" cy="148" r="6" fill="#fff" stroke="#3b82f6" stroke-width="2"/><text x="598" y="151.5" font-family="Liberation Sans" font-size="12" fill="#1e293b" stroke="#ffffff" stroke-opacity="0.6" stroke-width="2" paint-order="stroke" stroke-linejoin="round">456 MHz - 459 MHz</text><circle cx="868" cy="238" r="7" fill="#3b82f6"/><text x="878" y="241.5" font-family="Liberation Sans" font-size="12" fill="#1e293b" stroke="#ffffff" stroke-opacity="0.6" stroke-width="2" paint-order="stroke" stroke-linejoin="round">Region 1</text><circle cx="868" cy="268" r="7" fill="#3b82f6"/><text x="878" y="271.5" font-family="Liberation Sans" font-size="12" fill="#1e293b" stroke="#ffffff" stroke-opacity="0.6" stroke-width="2" paint-order="stroke" stroke-linejoin="round">Region 2</text><circle cx="868" cy="298" r="7" fill="#3b82f6"/><text x="878" y="301.5" font-family="Liberation Sans" font-size="12" fill="#1e293b" stroke="#ffffff" stroke-opacity="0.6" stroke-width="2" paint-order="stroke" stroke-linejoin="round">Region 3</text><circle cx="588" cy="268" r="6" fill="#fff" stroke="#3b82f6" stroke-width="2"/><text x="598" y="271.5" font-family="Liberation Sans" font-size="12" fill="#1e293b" stroke="#ffffff" stroke-opacity="0.6" stroke-width="2" paint-order="stroke" stroke-linejoin="round">459 MHz - 460 MHz</text><circle cx="868" cy="358" r="7" fill="#3b82f6"/><text x="878" y="361.5" font-family="Liberation Sans" font-size="12" fill="#1e293b" stroke="#ffffff" stroke-opacity="0.6" stroke-width="2" paint-order="stroke" stroke-linejoin="round">Region 1</text><circle cx="868" cy="388" r="7" fill="#3b82f6"/><text x="878" y="391.5" font-family="Liberation Sans" font-size="12" fill="#1e293b" stroke="#ffffff" stroke-opacity="0.6" stroke-width="2" paint-order="stroke" stroke-linejoin="round">Region 2</text><circle cx="868" cy="418" r="7" fill="#3b82f6"/><text x="878" y="421.5" font-family="Liberation Sans" font-size="12" fill="#1e293b" stroke="#ffffff" stroke-opacity="0.6" stroke-width="2" paint-order="stroke" stroke-linejoin="round">Region 3</text><circle cx="588" cy="388" r="6" fill="#fff" stroke="#3b82f6" stroke-width="2"/><text x="598" y="391.5" font-family="Liberation Sans" font-size="12" fill="#1e293b" stroke="#ffffff" stroke-opacity="0.6" stroke-width="2" paint-order="stroke" stroke-linejoin="round">460 MHz - 470 MHz</text><circle cx="868" cy="478" r="7" fill="#3b82f6"/><text x="878" y="481.5" font-family="Liberation Sans" font-size="12" fill="#1e293b" stroke="#ffffff" stroke-opacity="0.6" stroke-width="2" paint-order="stroke" stroke-linejoin="round">Region 1</text><circle cx="868" cy="508" r="7" fill="#3b82f6"/><text x="878" y="511.5" font-family="Liberation Sans" font-size="12" fill="#1e293b" stroke="#ffffff" stroke-opacity="0.6" stroke-width="2" paint-order="stroke" stroke-linejoin="round">Region 2</text><circle cx="868" cy="538" r="7" fill="#3b82f6"/><text x="878" y="541.5" font-family="Liberation Sans" font-size="12" fill="#1e293b" stroke="#ffffff" stroke-opacity="0.6" stroke-width="2" paint-order="stroke" stroke-linejoin="round">Region 3</text><circle cx="588" cy="508" r="6" fill="#fff" stroke="#3b82f6" stroke-width="2"/><text x="598" y="511.5" font-family="Liberation Sans" font-size="12" fill="#1e293b" stroke="#ffffff" stroke-opacity="0.6" stroke-width="2" paint-order="stroke" stroke-linejoin="round">470 MHz - 512 MHz</text><circle cx="868" cy="598" r="7" fill="#3b82f6"/><text x="878" y="601.5" font-family="Liberation Sans" font-size="12" fill="#1e293b" stroke="#ffffff" stroke-opacity="0.6" stroke-width="2" paint-order="stroke" stroke-linejoin="round">Region 1</text><circle cx="868" cy="628" r="7" fill="#3b82f6"/><text x="878" y="631.5" font-family="Liberation Sans" font-size="12" fill="#1e293b" stroke="#ffffff" stroke-opacity="0.6" stroke-width="2" paint-order="stroke" stroke-linejoin="round">Region 2</text><circle cx="868" cy="658" r="7" fill="#3b82f6"/><text x="878" y="661.5" font-family="Liberation Sans" font-size="12" fill="#1e293b" stroke="#ffffff" stroke-opacity="0.6" stroke-width="2" paint-order="stroke" stroke-linejoin="round">Region 3</text><circle cx="588" cy="628" r="6" fill="#fff" stroke="#3b82f6" stroke-width="2"/><text x="598" y="631.5" font-family="Liberation Sans" font-size="12" fill="#1e293b" stroke="#ffffff" stroke-opacity="0.6" stroke-width="2" paint-order="stroke" stroke-linejoin="round">512 MHz - 585 MHz</text><circle cx="868" cy="718" r="7" fill="#3b82f6"/><text x="878" y="721.5" font-family="Liberation Sans" font-size="12" fill="#1e293b" stroke="#ffffff" stroke-opacity="0.6" stroke-width="2" paint-order="stroke" stroke-linejoin="round">Region 1</text><circle cx="868" cy="748" r="7" fill="#3b82f6"/><text x="878" y="751.5" font-family="Liberation Sans" font-size="12" fill="#1e293b" stroke="#ffffff" stroke-opacity="0.6" stroke-width="2" paint-order="stroke" stroke-linejoin="round">Region 2</text><circle cx="868" cy="778" r="7" fill="#3b82f6"/><text x="878" y="781.5" font-family="Liberation Sans" font-size="12" fill="#1e293b" stroke="#ffffff" stroke-opacity="0.6" stroke-width="2" paint-order="stroke" stroke-linejoin="round">Region 3</text><circle cx="588" cy="748" r="6" fill="#fff" stroke="#3b82f6" stroke-width="2"/><text x="598" y="751.5" font-family="Liberation Sans" font-size="12" fill="#1e293b" stroke="#ffffff" stroke-opacity="0.6" stroke-width="2" paint-order="stroke" stroke-linejoin="round">585 MHz - 608 MHz</text><circle cx="868" cy="838" r="7" fill="#3b82f6"/><text x="878" y="841.5" font-family="Liberation Sans" font-size="12" fill="#1e293b" stroke="#ffffff" stroke-opacity="0.6" stroke-width="2" paint-order="stroke" stroke-linejoin="round">Region 1</text><circle cx="868" cy="868" r="7" fill="#3b82f6"/><text x="878" y="871.5" font-family="Liberation Sans" font-size="12" fill="#1e293b" stroke="#ffffff" stroke-opacity="0.6" stroke-width="2" paint-order="stroke" stroke-linejoin="round">Region 2</text><circle cx="868" cy="898" r="7" fill="#3b82f6"/><text x="878" y="901.5" font-family="Liberation Sans" font-size="12" fill="#1e293b" stroke="#ffffff" stroke-opacity="0.6" stroke-width="2" paint-order="stroke" stroke-linejoin="round">Region 3</text><circle cx="588" cy="868" r="6" fill="#fff" stroke="#3b82f6" stroke-width="2"/><text x="598" y="871.5" font-family="Liberation Sans" font-size="12" fill="#1e293b" stroke="#ffffff" stroke-opacity="0.6" stroke-width="2" paint-order="stroke" stroke-linejoin="round">608 MHz - 610 MHz</text><circle cx="868" cy="958" r="7" fill="#3b82f6"/><text x="878" y="961.5" font-family="Liberation Sans" font-size="12" fill="#1e293b" stroke="#ffffff" stroke-opacity="0.6" stroke-width="2" paint-order="stroke" stroke-linejoin="round">Region 1</text><circle cx="868" cy="988" r="7" fill="#3b82f6"/><text x="878" y="991.5" font-family="Liberation Sans" font-size="12" fill="#1e293b" stroke="#ffffff" stroke-opacity="0.6" stroke-width="2" paint-order="stroke" stroke-linejoin="round">Region 2</text><circle cx="868" cy="1018" r="7" fill="#3b82f6"/><text x="878" y="1021.5" font-family="Liberation Sans" font-size="12" fill="#1e293b" stroke="#ffffff" stroke-opacity="0.6" stroke-width="2" paint-order="stroke" stroke-linejoin="round">Region 3</text><circle cx="588" cy="988" r="6" fill="#fff" stroke="#3b82f6" stroke-width="2"/><text x="598" y="991.5" font-family="Liberation Sans" font-size="12" fill="#1e293b" stroke="#ffffff" stroke-opacity="0.6" stroke-width="2" paint-order="stroke" stroke-linejoin="round">610 MHz - 614 MHz</text><circle cx="868" cy="1078" r="7" fill="#3b82f6"/><text x="878" y="1081.5" font-family="Liberation Sans" font-size="12" fill="#1e293b" stroke="#ffffff" stroke-opacity="0.6" stroke-width="2" paint-order="stroke" stroke-linejoin="round">Region 1</text><circle cx="868" cy="1108" r="7" fill="#3b82f6"/><text x="878" y="1111.5" font-family="Liberation Sans" font-size="12" fill="#1e293b" stroke="#ffffff" stroke-opacity="0.6" stroke-width="2" paint-order="stroke" stroke-linejoin="round">Region 2</text><circle cx="868" cy="1138" r="7" fill="#3b82f6"/><text x="878" y="1141.5" font-family="Liberation Sans" font-size="12" fill="#1e293b" stroke="#ffffff" stroke-opacity="0.6" stroke-width="2" paint-order="stroke" stroke-linejoin="round">Region 3</text><circle cx="588" cy="1108" r="6" fill="#fff" stroke="#3b82f6" stroke-width="2"/><text x="598" y="1111.5" font-family="Liberation Sans" font-size="12" fill="#1e293b" stroke="#ffffff" stroke-opacity="0.6" stroke-width="2" paint-order="stroke" stroke-linejoin="round">614 MHz - 646 MHz</text></g></g><rect x="0" y="97" width="207" height="377" fill="#f8fafc"/><rect x="207" y="97" width="1" height="377" fill="#e2e8f0"/><rect x="0" y="141" width="207" height="1" fill="#e2e8f0"/><text x="12" y="124" font-size="14.56" font-weight="700" fill="#1e293b" stroke="#1e293b" stroke-width="0.35" textLength="138.20" lengthAdjust="spacing">Hierarchy Builder</text><g transform="translate(179,111) scale(0.6667)" fill="none" stroke="#94a3b8" stroke-width="2" stroke-linecap="round" stroke-linejoin="round"><rect x="3" y="3" width="18" height="18" rx="2"/><path d="M9 3v18"/><path d="m16 15-3-3 3-3"/></g><g opacity="1"><rect x="12.5" y="154.5" width="182" height="28.5" rx="4" fill="#ffffff" stroke="#e2e8f0" filter="url(#sh)"/><g transform="translate(19,162) scale(0.5833333333333334)" fill="none" stroke="#94a3b8" stroke-width="2" stroke-linecap="round" stroke-linejoin="round"><circle cx="9" cy="5" r="1"/><circle cx="9" cy="12" r="1"/><circle cx="9" cy="19" r="1"/><circle cx="15" cy="5" r="1"/><circle cx="15" cy="12" r="1"/><circle cx="15" cy="19" r="1"/></g><g transform="translate(156,162) scale(0.5833333333333334)" fill="none" stroke="#3b82f6" stroke-width="2" stroke-linecap="round" stroke-linejoin="round"><path d="M2.062 12.348a1 1 0 0 1 0-.696 10.75 10.75 0 0 1 19.876 0 1 1 0 0 1 0 .696 10.75 10.75 0 0 1-19.876 0"/><circle cx="12" cy="12" r="3"/></g><g transform="translate(174.1,162) scale(0.5833333333333334)" fill="none" stroke="#7b8aa3" stroke-width="2" stroke-linecap="round" stroke-linejoin="round"><path d="M18 6 6 18"/><path d="m6 6 12 12"/></g></g><text x="39" y="173" font-size="12.48" font-weight="400" fill="#334155" stroke="#334155" stroke-width="0.1" textLength="62.00" lengthAdjust="spacing" opacity="1">Frequency</text><g opacity="1"><rect x="12.5" y="190.5" width="182" height="28.5" rx="4" fill="#ffffff" stroke="#e2e8f0" filter="url(#sh)"/><g transform="translate(19,198) scale(0.5833333333333334)" fill="none" stroke="#94a3b8" stroke-width="2" stroke-linecap="round" stroke-linejoin="round"><circle cx="9" cy="5" r="1"/><circle cx="9" cy="12" r="1"/><circle cx="9" cy="19" r="1"/><circle cx="15" cy="5" r="1"/><circle cx="15" cy="12" r="1"/><circle cx="15" cy="19" r="1"/></g><g transform="translate(156,198) scale(0.5833333333333334)" fill="none" stroke="#3b82f6" stroke-width="2" stroke-linecap="round" stroke-linejoin="round"><path d="M2.062 12.348a1 1 0 0 1 0-.696 10.75 10.75 0 0 1 19.876 0 1 1 0 0 1 0 .696 10.75 10.75 0 0 1-19.876 0"/><circle cx="12" cy="12" r="3"/></g><g transform="translate(174.1,198) scale(0.5833333333333334)" fill="none" stroke="#7b8aa3" stroke-width="2" stroke-linecap="round" stroke-linejoin="round"><path d="M18 6 6 18"/><path d="m6 6 12 12"/></g></g><text x="39" y="209" font-size="12.48" font-weight="400" fill="#334155" stroke="#334155" stroke-width="0.1" textLength="41.09" lengthAdjust="spacing" opacity="1">Region</text><g opacity="1"><rect x="12.5" y="226.5" width="182" height="28.5" rx="4" fill="#ffffff" stroke="#e2e8f0" filter="url(#sh)"/><g transform="translate(19,234) scale(0.5833333333333334)" fill="none" stroke="#94a3b8" stroke-width="2" stroke-linecap="round" stroke-linejoin="round"><circle cx="9" cy="5" r="1"/><circle cx="9" cy="12" r="1"/><circle cx="9" cy="19" r="1"/><circle cx="15" cy="5" r="1"/><circle cx="15" cy="12" r="1"/><circle cx="15" cy="19" r="1"/></g><g transform="translate(156,234) scale(0.5833333333333334)" fill="none" stroke="#cbd5e1" stroke-width="2" stroke-linecap="round" stroke-linejoin="round"><path d="M10.733 5.076a10.744 10.744 0 0 1 11.205 6.575 1 1 0 0 1 0 .696 10.747 10.747 0 0 1-1.444 2.49"/><path d="M14.084 14.158a3 3 0 0 1-4.242-4.242"/><path d="M17.479 17.499a10.75 10.75 0 0 1-15.417-5.151 1 1 0 0 1 0-.696 10.75 10.75 0 0 1 4.446-5.143"/><path d="m2 2 20 20"/></g><g transform="translate(174.1,234) scale(0.5833333333333334)" fill="none" stroke="#7b8aa3" stroke-width="2" stroke-linecap="round" stroke-linejoin="round"><path d="M18 6 6 18"/><path d="m6 6 12 12"/></g></g><text x="39" y="245" font-size="12.48" font-weight="400" fill="#334155" stroke="#334155" stroke-width="0.1" textLength="44.36" lengthAdjust="spacing" opacity="1">Service</text><g opacity="0.5"><rect x="12.5" y="262.5" width="182" height="28.5" rx="4" fill="#ffffff" stroke="#e2e8f0" filter="url(#sh)"/><g transform="translate(19,270) scale(0.5833333333333334)" fill="none" stroke="#94a3b8" stroke-width="2" stroke-linecap="round" stroke-linejoin="round"><circle cx="9" cy="5" r="1"/><circle cx="9" cy="12" r="1"/><circle cx="9" cy="19" r="1"/><circle cx="15" cy="5" r="1"/><circle cx="15" cy="12" r="1"/><circle cx="15" cy="19" r="1"/></g><g transform="translate(156,270) scale(0.5833333333333334)" fill="none" stroke="#cbd5e1" stroke-width="2" stroke-linecap="round" stroke-linejoin="round"><path d="M10.733 5.076a10.744 10.744 0 0 1 11.205 6.575 1 1 0 0 1 0 .696 10.747 10.747 0 0 1-1.444 2.49"/><path d="M14.084 14.158a3 3 0 0 1-4.242-4.242"/><path d="M17.479 17.499a10.75 10.75 0 0 1-15.417-5.151 1 1 0 0 1 0-.696 10.75 10.75 0 0 1 4.446-5.143"/><path d="m2 2 20 20"/></g><g transform="translate(174.1,270) scale(0.5833333333333334)" fill="none" stroke="#7b8aa3" stroke-width="2" stroke-linecap="round" stroke-linejoin="round"><path d="M18 6 6 18"/><path d="m6 6 12 12"/></g></g><text x="39" y="281" font-size="12.48" font-weight="400" fill="#334155" stroke="#334155" stroke-width="0.1" textLength="59.16" lengthAdjust="spacing" opacity="0.5">Footnotes</text><text x="12" y="327" font-size="10.0" font-weight="700" fill="#8b9bb5" stroke="#8b9bb5" stroke-width="0.35" textLength="64.53" lengthAdjust="spacing">AVAILABLE</text><rect x="12.5" y="339.5" width="182" height="29" rx="3" fill="none" stroke="#cbd5e1" stroke-dasharray="3 2"/><text x="19" y="358" font-size="12.48" font-weight="400" fill="#475569" stroke="#475569" stroke-width="0.1" textLength="54.83" lengthAdjust="spacing">Category</text><g transform="translate(174.2,347.3) scale(0.5833333333333334)" fill="none" stroke="#94a3b8" stroke-width="2" stroke-linecap="round" stroke-linejoin="round"><path d="M5 12h14"/><path d="M12 5v14"/></g><rect x="0" y="381" width="207" height="1" fill="#e2e8f0"/><rect x="0" y="382" width="207" height="92" fill="#f1f5f9"/><rect x="12.5" y="394.5" width="87" height="29" rx="3.5" fill="#fff" stroke="#cbd5e1" filter="url(#sh)"/><text x="24" y="413" font-size="12.48" font-weight="400" fill="#334155" stroke="#334155" stroke-width="0.1" textLength="63.58" lengthAdjust="spacing">Expand All</text><rect x="108.5" y="394.5" width="86" height="29" rx="3.5" fill="#fff" stroke="#cbd5e1" filter="url(#sh)"/><text x="116.5" y="413" font-size="12.48" font-weight="400" fill="#334155" stroke="#334155" stroke-width="0.1" textLength="69.69" lengthAdjust="spacing">Collapse All</text><rect x="12.5" y="432.5" width="182" height="29" rx="3.5" fill="#fff" stroke="#cbd5e1" filter="url(#sh)"/><text x="63" y="451" font-size="12.48" font-weight="400" fill="#334155" stroke="#334155" stroke-width="0.1" textLength="81.19" lengthAdjust="spacing">Reset Default</text><rect x="0" y="0" width="1920" height="56" fill="#ffffff"/><rect x="0" y="56" width="1920" height="1" fill="#eaeff5"/><text x="16" y="34" font-size="18.72" font-weight="700" fill="#1255ff" stroke="#1255ff" stroke-width="0.35" textLength="448.88" lengthAdjust="spacing">Table of Frequency Allocation Map (RR2024)</text><rect x="497" y="12" width="252" height="32" rx="16" fill="#f1f5f9"/><rect x="755" y="12" width="252" height="32" rx="16" fill="#f1f5f9"/><rect x="1013" y="12" width="252" height="32" rx="16" fill="#f1f5f9"/><text x="507.3" y="30" font-size="9.0" font-weight="700" fill="#8a9bb8" stroke="#8a9bb8" stroke-width="0.35" textLength="26.89" lengthAdjust="spacing">FREQ</text><text x="540.8" y="33" font-size="14.56" font-weight="400" fill="#7c8594" stroke="#7c8594" stroke-width="0.1" textLength="48.11" lengthAdjust="spacing">Search</text><text x="765" y="30" font-size="9.0" font-weight="700" fill="#8a9bb8" stroke="#8a9bb8" stroke-width="0.35" textLength="20.06" lengthAdjust="spacing">SVC</text><text x="790.8" y="33" font-size="14.56" font-weight="400" fill="#7c8594" stroke="#7c8594" stroke-width="0.1" textLength="48.11" lengthAdjust="spacing">Search</text><text x="1023.3" y="30" font-size="9.0" font-weight="700" fill="#8a9bb8" stroke="#8a9bb8" stroke-width="0.35" textLength="13.69" lengthAdjust="spacing">FN</text><text x="1044.8" y="33" font-size="14.56" font-weight="400" fill="#7c8594" stroke="#7c8594" stroke-width="0.1" textLength="48.11" lengthAdjust="spacing">Search</text><rect x="1281" y="13" width="97" height="30" rx="6" fill="#f1f5f9"/><text x="1296.5" y="33" font-size="14.56" font-weight="400" fill="#1e293b" stroke="#1e293b" stroke-width="0.1" textLength="29.97" lengthAdjust="spacing">MHz</text><path d="M1366.4 26.4 L1370 30 L1373.6 26.4" fill="none" stroke="#1e293b" stroke-width="2" stroke-linecap="round" stroke-linejoin="round"/><rect x="1394" y="12" width="245" height="32" rx="8" fill="#f1f5f9"/><text x="1409.3" y="32" font-size="12.48" font-weight="400" fill="#64748b" stroke="#64748b" stroke-width="0.1" textLength="52.53" lengthAdjust="spacing">Region 1</text><text x="1490" y="32" font-size="12.48" font-weight="400" fill="#64748b" stroke="#64748b" stroke-width="0.1" textLength="52.53" lengthAdjust="spacing">Region 2</text><text x="1570.4" y="32" font-size="12.48" font-weight="400" fill="#64748b" stroke="#64748b" stroke-width="0.1" textLength="52.53" lengthAdjust="spacing">Region 3</text><g transform="translate(1856,20) scale(0.6666666666666666)" fill="none" stroke="#64748b" stroke-width="2" stroke-linecap="round" stroke-linejoin="round"><path d="M12 15V3"/><path d="M21 15v4a2 2 0 0 1-2 2H5a2 2 0 0 1-2-2v-4"/><path d="m7 10 5 5 5-5"/></g><text x="1876" y="31.7" font-size="10.0" font-weight="700" fill="#4a5d7e" stroke="#4a5d7e" stroke-width="0.35" textLength="22.47" lengthAdjust="spacing">CSV</text><rect x="0" y="57" width="1920" height="39" fill="#ffffff"/><rect x="0" y="96" width="1920" height="1" fill="#e2e8f0"/><text x="16" y="80" font-size="10.0" font-weight="700" fill="#8b9bb5" stroke="#8b9bb5" stroke-width="0.35" textLength="61.94" lengthAdjust="spacing">SATELLITE</text><rect x="86.75" y="66.5" width="38.95" height="21" rx="6" fill="#fff" stroke="#e2e8f0"/><text x="95.25" y="81" font-size="12.0" font-weight="400" fill="#475569" stroke="#475569" stroke-width="0.1" textLength="21.94" lengthAdjust="spacing">FSS</text><rect x="130.7" y="66.5" width="42.610000000000014" height="21" rx="6" fill="#fff" stroke="#e2e8f0"/><text x="139.2" y="81" font-size="12.0" font-weight="400" fill="#475569" stroke="#475569" stroke-width="0.1" textLength="25.59" lengthAdjust="spacing">MSS</text><rect x="178.31" y="66.5" width="40.28" height="21" rx="6" fill="#fff" stroke="#e2e8f0"/><text x="186.81" y="81" font-size="12.0" font-weight="400" fill="#475569" stroke="#475569" stroke-width="0.1" textLength="23.27" lengthAdjust="spacing">BSS</text><rect x="223.59" y="66.5" width="49.83000000000001" height="21" rx="6" fill="#fff" stroke="#e2e8f0"/><text x="232.09" y="81" font-size="12.0" font-weight="400" fill="#475569" stroke="#475569" stroke-width="0.1" textLength="32.81" lengthAdjust="spacing">RDSS</text><rect x="278.42" y="66.5" width="49.579999999999984" height="21" rx="6" fill="#fff" stroke="#e2e8f0"/><text x="286.92" y="81" font-size="12.0" font-weight="400" fill="#475569" stroke="#475569" stroke-width="0.1" textLength="32.56" lengthAdjust="spacing">RNSS</text><rect x="333.0" y="66.5" width="41.69999999999999" height="21" rx="6" fill="#fff" stroke="#e2e8f0"/><text x="341.5" y="81" font-size="12.0" font-weight="400" fill="#475569" stroke="#475569" stroke-width="0.1" textLength="24.69" lengthAdjust="spacing">SOS</text><rect x="379.7" y="66.5" width="35.80000000000001" height="21" rx="6" fill="#fff" stroke="#e2e8f0"/><text x="388.2" y="81" font-size="12.0" font-weight="400" fill="#475569" stroke="#475569" stroke-width="0.1" textLength="18.78" lengthAdjust="spacing">ISS</text><rect x="420.5" y="66.5" width="47.410000000000025" height="21" rx="6" fill="#fff" stroke="#e2e8f0"/><text x="429.0" y="81" font-size="12.0" font-weight="400" fill="#475569" stroke="#475569" stroke-width="0.1" textLength="30.41" lengthAdjust="spacing">EESS</text><rect x="472.91" y="66.5" width="40.589999999999975" height="21" rx="6" fill="#fff" stroke="#e2e8f0"/><text x="481.41" y="81" font-size="12.0" font-weight="400" fill="#475569" stroke="#475569" stroke-width="0.1" textLength="23.58" lengthAdjust="spacing">SRS</text><rect x="518.5" y="66.5" width="54.700000000000045" height="21" rx="6" fill="#fff" stroke="#e2e8f0"/><text x="527.0" y="81" font-size="12.48" font-weight="400" fill="#475569" stroke="#475569" stroke-width="0.1" textLength="37.69" lengthAdjust="spacing">MetSS</text><rect x="578.2" y="66.5" width="48.95999999999992" height="21" rx="6" fill="#fff" stroke="#e2e8f0"/><text x="586.7" y="81" font-size="12.48" font-weight="400" fill="#475569" stroke="#475569" stroke-width="0.1" textLength="31.97" lengthAdjust="spacing">Amat</text><rect x="632.16" y="66.5" width="40.680000000000064" height="21" rx="6" fill="#fff" stroke="#e2e8f0"/><text x="640.66" y="81" font-size="12.0" font-weight="400" fill="#475569" stroke="#475569" stroke-width="0.1" textLength="23.69" lengthAdjust="spacing">RAS</text><rect x="677.84" y="66.5" width="53.90999999999997" height="21" rx="6" fill="#fff" stroke="#e2e8f0"/><text x="686.34" y="81" font-size="12.0" font-weight="400" fill="#475569" stroke="#475569" stroke-width="0.1" textLength="36.88" lengthAdjust="spacing">SFTSS</text><rect x="756" y="67" width="1" height="20" fill="#e2e8f0"/><text x="765" y="80" font-size="10.0" font-weight="700" fill="#8b9bb5" stroke="#8b9bb5" stroke-width="0.35" textLength="49.42" lengthAdjust="spacing">INSIGHT</text><rect x="823.6" y="70.6" width="12.8" height="12.8" rx="2.2" fill="#fff" stroke="#737373"/><rect x="902.6" y="70.6" width="12.8" height="12.8" rx="2.2" fill="#fff" stroke="#737373"/><text x="841.2" y="81" font-size="12.48" font-weight="400" fill="#475569" stroke="#475569" stroke-width="0.1" textLength="52.91" lengthAdjust="spacing">Footnote</text><text x="920.4" y="81" font-size="12.48" font-weight="400" fill="#475569" stroke="#475569" stroke-width="0.1" textLength="41.09" lengthAdjust="spacing">Region</text><text x="1733" y="80" font-size="10.0" font-weight="700" fill="#8b9bb5" stroke="#8b9bb5" stroke-width="0.35" textLength="39.66" lengthAdjust="spacing">DEPTH</text><rect x="1782.5" y="73.5" width="93" height="7" rx="3.5" fill="#efefef" stroke="#b2b2b2"/><rect x="1782" y="73" width="48" height="8" rx="4" fill="#195fff"/><circle cx="1829" cy="77" r="7.3" fill="#0048ff"/><text x="1885.3" y="81" font-size="12.4" font-weight="400" fill="#334155" stroke="#334155" stroke-width="0.1">2/4</text>
</svg></body></html>
